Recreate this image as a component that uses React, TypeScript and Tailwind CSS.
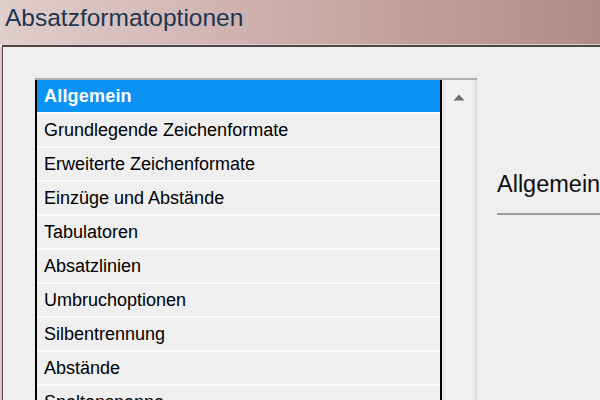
import React from "react";

const items = [
  "Grundlegende Zeichenformate",
  "Erweiterte Zeichenformate",
  "Einzüge und Abstände",
  "Tabulatoren",
  "Absatzlinien",
  "Umbruchoptionen",
  "Silbentrennung",
  "Abstände",
  "Spaltenspanne",
];

export default function App() {
  return (
    <div
      className="w-[600px] h-[400px] overflow-hidden flex flex-col bg-[#efefef]"
      style={{ fontFamily: '"Liberation Sans", Arial, sans-serif' }}
    >
      {/* Title bar */}
      <div className="h-[44px] shrink-0 flex items-center pl-[5px] bg-[linear-gradient(90deg,#dfcecc_0%,#cfb2b0_40%,#bf9a97_75%,#b08b88_100%)]">
        <span className="text-[24.5px] leading-none text-[#1d3550] -mt-[7px]">
          Absatzformatoptionen
        </span>
      </div>
      <div className="h-[1px] shrink-0 bg-[#e6d2d2]" />
      <div className="h-[2px] shrink-0 bg-[#4d4444] ml-[2px]" />

      {/* Body */}
      <div className="flex-1 flex min-h-0">
        <div className="w-[2px] shrink-0 bg-[#dac6c5]" />
        <div className="w-[1px] shrink-0 bg-[#5a4a4a]" />
        <div className="flex-1 flex pt-[31px] pl-[32px] min-w-0">
          {/* List box */}
          <div className="w-[442px] shrink-0 border-t-2 border-[#adadad] flex">
            <div className="w-[407px] border-l-2 border-r-2 border-black flex flex-col">
              <div className="h-[34px] shrink-0 bg-[#0a93f4] border-b-2 border-[#fafafa] flex items-center pl-[7px]">
                <span className="text-[18px] font-bold text-white tracking-[0.2px]">Allgemein</span>
              </div>
              {items.map((t) => (
                <div
                  key={t}
                  className="h-[34px] shrink-0 bg-[#efefef] border-b-2 border-[#fafafa] flex items-center pl-[7px]"
                >
                  <span className="text-[18px] text-black">{t}</span>
                </div>
              ))}
            </div>
            {/* Scrollbar */}
            <div className="w-[35px] shrink-0 bg-[#ebebeb] border-r-2 border-[#dadada] flex">
              <div className="flex-1 mx-[3px] bg-[#f1f1f1] flex justify-center pt-[14px]">
                <svg width="12" height="7" viewBox="0 0 12 7">
                  <path d="M6 0.5 L11.5 6.5 L0.5 6.5 Z" fill="#6e6e6e" />
                </svg>
              </div>
            </div>
          </div>

          {/* Right panel */}
          <div className="flex-1 min-w-0 pl-[20px] pt-[91px]">
            <div className="text-[23.5px] leading-[30px] text-[#111] whitespace-nowrap">Allgemein</div>
            <div className="h-[2px] bg-[#9d9d9d] mt-[14px]" />
          </div>
        </div>
      </div>
    </div>
  );
}
